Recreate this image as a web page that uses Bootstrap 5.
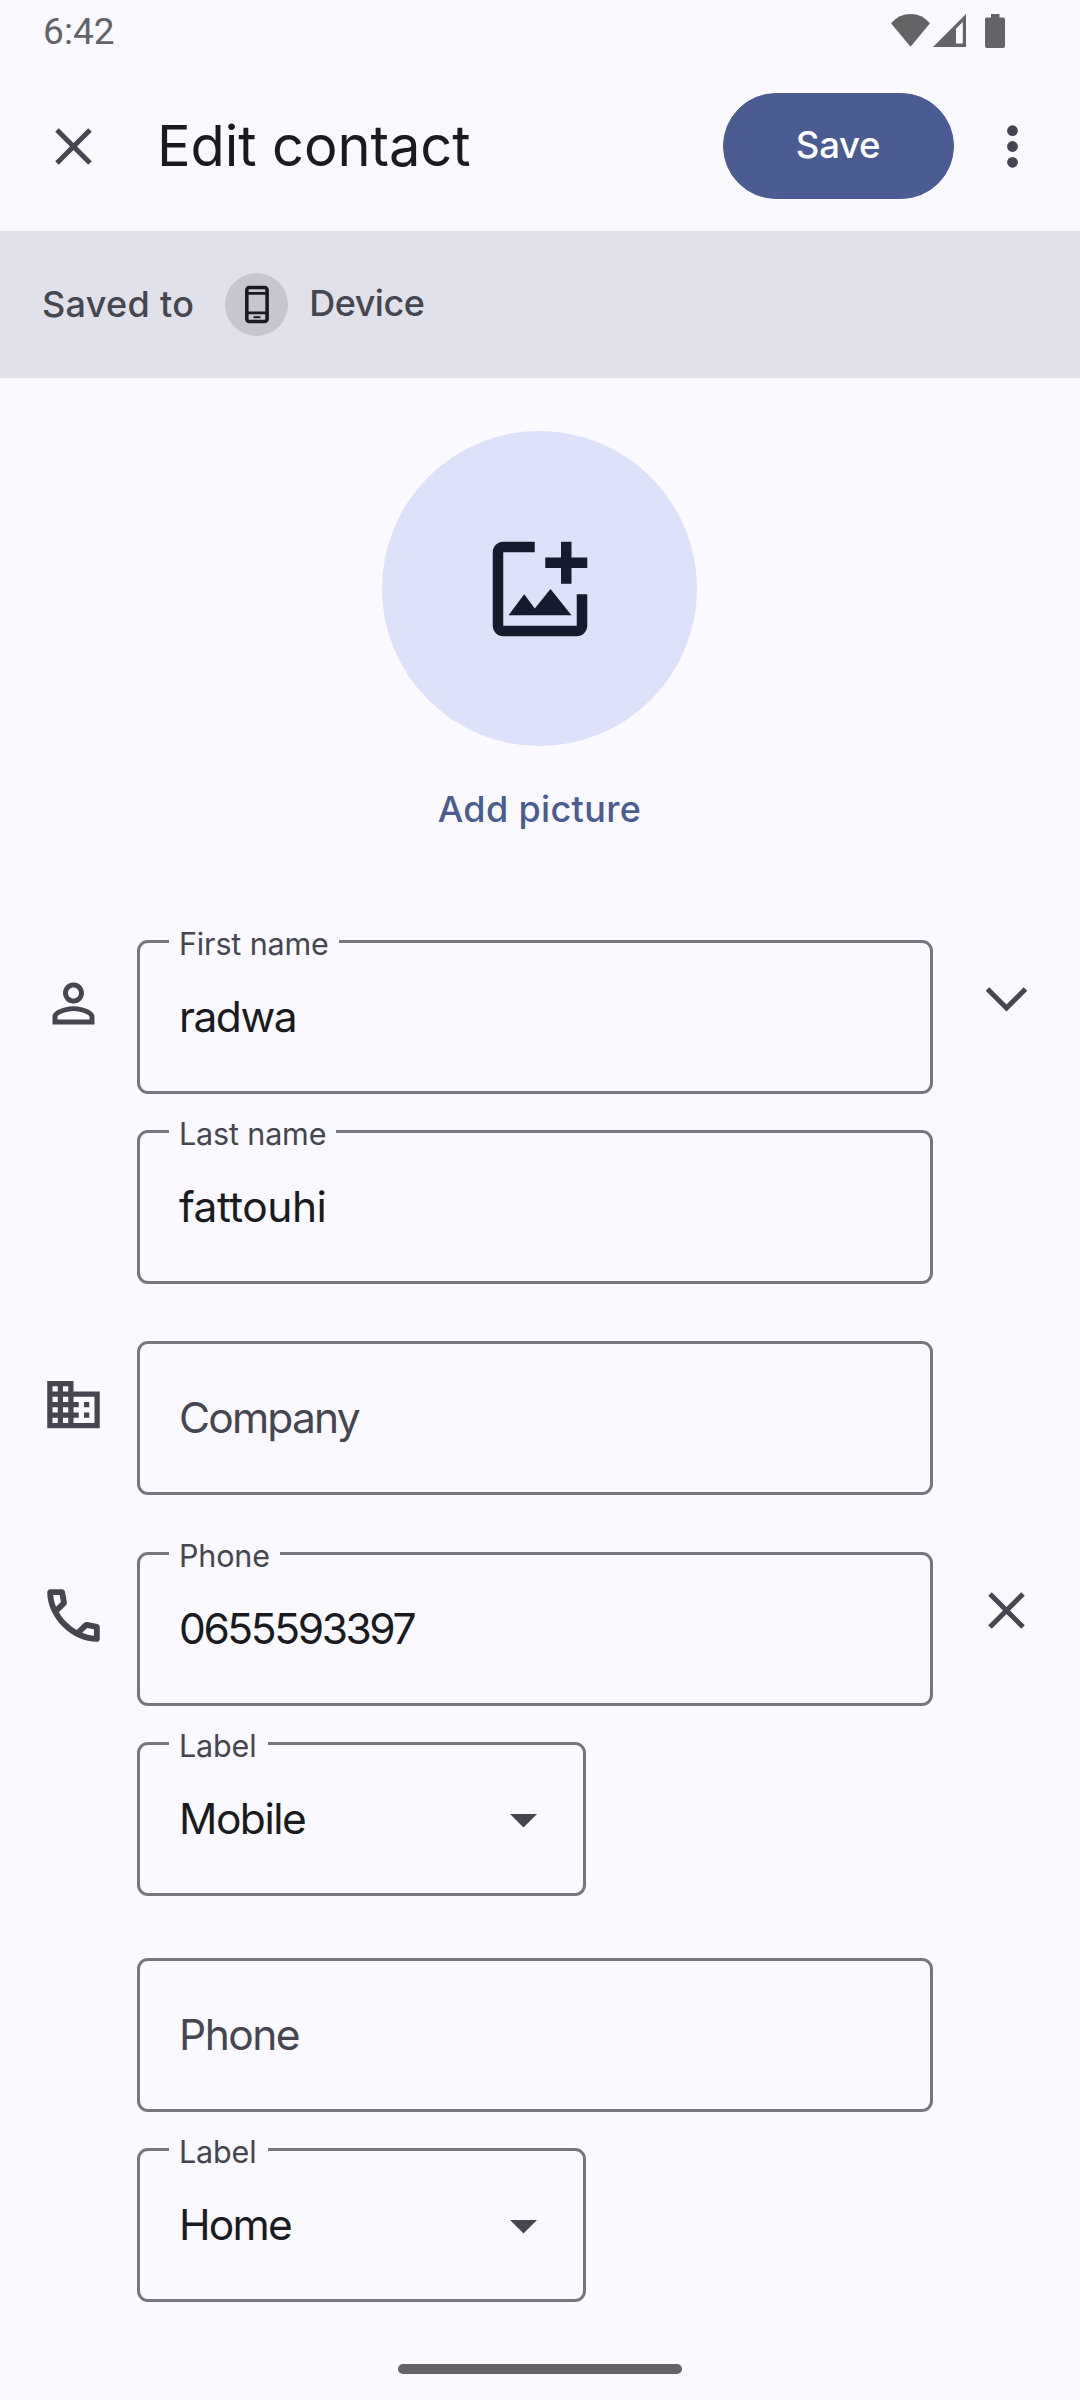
<!DOCTYPE html>
<html lang="en">
<head>
<meta charset="utf-8">
<meta name="viewport" content="width=device-width, initial-scale=1">
<title>Edit contact</title>
<link href="https://cdn.jsdelivr.net/npm/bootstrap@5.3.0/dist/css/bootstrap.min.css" rel="stylesheet">
<style>
  :root { --surface:#faf9ff; --ink:#1a1b21; --muted:#45464f; --outline:#757780; --accent:#4a5c92; }
  body { background:var(--surface); color:var(--ink); font-family:Inter, Roboto, sans-serif; font-kerning:normal; }
  svg { display:block; }
  .screen { width:1080px; height:2400px; overflow:hidden; }
  .statusbar { height:62px; padding:14px 75px 0 43px; color:#646466; }
  .clock { font:400 37px/36px Roboto, sans-serif; letter-spacing:.1px; }
  .appbar { height:169px; padding:0 36px 0 42px; }
  .appbar-title { font-size:56px; line-height:64px; letter-spacing:-.1px; margin:0 0 0 52px; padding-bottom:1px; font-weight:400; }
  .btn-save { --bs-btn-color:#fff; --bs-btn-bg:var(--accent); --bs-btn-border-color:var(--accent);
    width:231px; height:106px; padding:0 1px 0 0; font-size:36.5px; font-weight:500; letter-spacing:-.3px; margin:0 27px 2px 0; }
  .account { height:147px; background:#e1e1eb; color:var(--muted); font-size:36px; font-weight:500; padding:0 42px; }
  .account-icon { width:63px; height:63px; background:#c5c6d0; color:var(--ink); margin:0 21px 0 31px; }
  .saved-label { letter-spacing:.3px; padding-bottom:2px; }
  .account-name { letter-spacing:-.5px; padding-bottom:3px; }
  .photo { padding:53px 1px 0 0; }
  .avatar { width:315px; height:315px; background:#dde1f9; color:#151b2c; }
  .add-link { color:var(--accent); font-size:36px; line-height:44px; font-weight:500; letter-spacing:.35px; margin-top:41px; text-decoration:none; }
  .entries { padding-top:109px; }
  .entry + .entry { margin-top:57px; }
  .entry + .entry-extra { margin-top:62px; }
  .lead-icon { width:137px; padding:32px 0 0 42px; color:var(--muted); }
  .trail-icon { padding:28px 0 0 42px; color:var(--muted); }
  .fields { width:796px; gap:36px; }
  .outlined { position:relative; height:154px; }
  .outlined .form-control { height:154px; border:3px solid var(--outline); border-radius:11px; background:transparent;
    padding:0 38px 2px 39px; font-size:42.5px; color:var(--ink); letter-spacing:-1.5px; }
  .outlined .form-control::placeholder { color:var(--muted); opacity:1; }
  .outlined .track-wide { letter-spacing:-.5px; }
  .outlined .track-tight { letter-spacing:-1.8px; }
  .outlined .track-digits { letter-spacing:-2.4px; }
  .outlined label { position:absolute; top:-11px; left:32px; height:30px; line-height:30px; padding:0 10px; background:var(--surface);
    font-size:30.5px; color:var(--muted); white-space:nowrap; letter-spacing:-.15px; }
  .outlined .caret { position:absolute; right:49px; top:72px; color:var(--muted); }
  .short { width:449px; }
  .short label { width:99px; }
  .home-pill { width:284px; height:10px; background:#646466; margin-bottom:26px; }
</style>
</head>
<body>
<div class="screen d-flex flex-column">
  <div class="statusbar d-flex justify-content-between align-items-start">
    <span class="clock">6:42</span>
    <svg width="114" height="34" viewBox="0 0 114 34" fill="currentColor">
      <path d="M0 9.3Q8 0 19.5 0T39 9.3L19.5 32.8Z"/>
      <path fill-rule="evenodd" d="M42 33L75 0V33ZM65 14.5V29.5H71.8V8Z"/>
      <path d="M100 3.5V0h8.5v3.5H112q2 0 2 2V32q0 2-2 2H96q-2 0-2-2V5.500q0-2 2-2Z"/>
    </svg>
  </div>

  <header class="appbar d-flex align-items-center">
    <svg width="63" height="63" viewBox="0 0 63 63" fill="none" stroke="#45464f" stroke-width="5"><path d="M15 15L48 48M48 15L15 48"/></svg>
    <h1 class="appbar-title">Edit contact</h1>
    <button class="btn btn-save rounded-pill ms-auto" type="button">Save</button>
    <svg width="63" height="63" viewBox="0 0 63 63" fill="#45464f"><circle cx="31.500" cy="15.700" r="5.400"/><circle cx="31.500" cy="31.500" r="5.400"/><circle cx="31.500" cy="47.300" r="5.400"/></svg>
  </header>

  <div class="account d-flex align-items-center flex-shrink-0">
    <span class="saved-label">Saved to</span>
    <span class="account-icon rounded-circle">
      <svg width="63" height="63" viewBox="0 0 63 63" fill="none" stroke="currentColor">
        <rect x="21.800" y="14.500" width="20.300" height="34" rx="2.500" stroke-width="3.600"/>
        <path d="M21 20.300H43M21 39.800H43" stroke-width="2.800"/><path d="M28.500 44.200H35.500" stroke-width="2"/>
      </svg>
    </span>
    <span class="account-name">Device</span>
  </div>

  <section class="photo d-flex flex-column align-items-center">
    <div class="avatar rounded-circle d-flex align-items-center justify-content-center">
      <svg width="126" height="126" viewBox="0 0 24 24" fill="currentColor">
        <path d="M11 3H5C3.900 3 3 3.900 3 5V19C3 20.100 3.900 21 5 21H19C20.100 21 21 20.100 21 19V13H19V19H5V5H11Z"/>
        <path d="M16 3H18V6H21V8H18V11H16V8H13V6H16Z"/>
        <path d="M6 17L9 13L11 15.700L14 12L18 17Z"/>
      </svg>
    </div>
    <a class="add-link" href="#">Add picture</a>
  </section>

  <main class="entries">
    <div class="entry d-flex">
      <div class="lead-icon"><svg width="63" height="63" viewBox="0 0 24 24" fill="currentColor"><path d="M12 5.900c1.160 0 2.100.94 2.100 2.100s-.94 2.100-2.100 2.100S9.900 9.160 9.900 8s.94-2.100 2.100-2.100m0 9c2.970 0 6.100 1.460 6.100 2.100v1.100H5.900V17c0-.64 3.130-2.100 6.100-2.100M12 4C9.790 4 8 5.790 8 8s1.790 4 4 4 4-1.790 4-4-1.790-4-4-4zm0 9c-2.670 0-8 1.340-8 4v3h16v-3c0-2.660-5.330-4-8-4z"/></svg></div>
      <div class="fields d-flex flex-column">
        <div class="outlined"><input id="first" class="form-control" value="radwa"><label for="first">First name</label></div>
        <div class="outlined"><input id="last" class="form-control track-wide" value="fattouhi"><label for="last">Last name</label></div>
      </div>
      <div class="trail-icon"><svg width="63" height="63" viewBox="0 0 63 63" fill="none" stroke="currentColor" stroke-width="5"><path d="M12.500 21L31.500 40L50.500 21"/></svg></div>
    </div>

    <div class="entry d-flex">
      <div class="lead-icon"><svg width="63" height="63" viewBox="0 0 24 24" fill="currentColor"><path d="M12 7V3H2v18h20V7H12zM6 19H4v-2h2v2zm0-4H4v-2h2v2zm0-4H4V9h2v2zm0-4H4V5h2v2zm4 12H8v-2h2v2zm0-4H8v-2h2v2zm0-4H8V9h2v2zm0-4H8V5h2v2zm10 12h-8v-2h2v-2h-2v-2h2v-2h-2V9h8v10zm-2-8h-2v2h2v-2zm0 4h-2v2h2v-2z"/></svg></div>
      <div class="fields"><div class="outlined"><input class="form-control track-tight" placeholder="Company"></div></div>
    </div>

    <div class="entry d-flex">
      <div class="lead-icon"><svg width="63" height="63" viewBox="48 -912 864 864" fill="currentColor"><path d="M798-120q-125 0-247-54.500T329-329Q229-429 174.500-551T120-798q0-18 12-30t30-12h162q14 0 25 9.500t13 22.500l26 140q2 16-1 27t-11 19l-97 98q20 37 47.500 71.500T387-386q31 31 65 57.500t72 48.500l94-94q9-9 23.500-13.500T670-390l138 28q14 4 23 14.500t9 23.500v162q0 18-12 30t-30 12ZM241-600l66-66-17-94h-89q5 41 14 81t26 79Zm358 358q39 17 79.500 27t81.500 13v-88l-94-19-67 67Z"/></svg></div>
      <div class="fields d-flex flex-column">
        <div class="outlined"><input id="phone" class="form-control track-digits" value="0655593397"><label for="phone">Phone</label></div>
        <div class="outlined short"><input id="kind1" class="form-control" value="Mobile"><label for="kind1">Label</label>
          <svg class="caret" width="27" height="14" viewBox="0 0 27 14" fill="currentColor"><path d="M0 0H27L13.500 13.500Z"/></svg></div>
      </div>
      <div class="trail-icon"><svg width="63" height="63" viewBox="0 0 63 63" fill="none" stroke="currentColor" stroke-width="5"><path d="M15 14L48 47M48 14L15 47"/></svg></div>
    </div>

    <div class="entry entry-extra d-flex">
      <div class="lead-icon"></div>
      <div class="fields d-flex flex-column">
        <div class="outlined"><input class="form-control" placeholder="Phone"></div>
        <div class="outlined short"><input id="kind2" class="form-control track-tight" value="Home"><label for="kind2">Label</label>
          <svg class="caret" width="27" height="14" viewBox="0 0 27 14" fill="currentColor"><path d="M0 0H27L13.500 13.500Z"/></svg></div>
      </div>
    </div>
  </main>

  <div class="home-pill rounded-pill mx-auto mt-auto flex-shrink-0"></div>
</div>
<script src="https://cdn.jsdelivr.net/npm/bootstrap@5.3.0/dist/js/bootstrap.bundle.min.js"></script>
</body>
</html>
